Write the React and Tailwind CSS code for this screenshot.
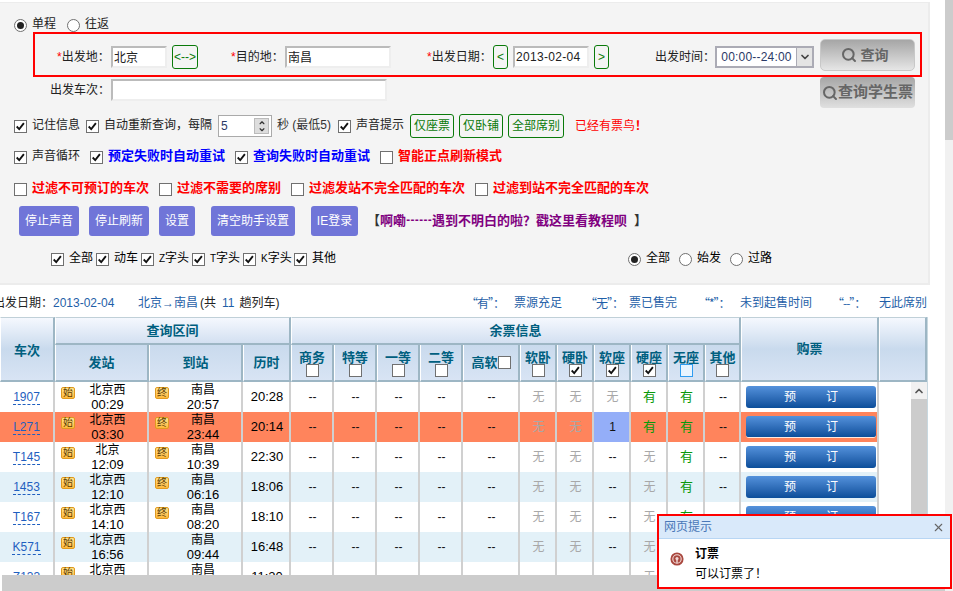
import React from "react";
import { Search, X, ChevronUp, ChevronDown } from "lucide-react";

const Check = () => (
  <svg viewBox="0 0 13 13" className="w-[11px] h-[11px]">
    <path d="M2 6.5 L5 9.5 L10.5 2.5" fill="none" stroke="#111" strokeWidth="2.2" />
  </svg>
);

function Cb({ on, hover, cls = "" }) {
  return (
    <span className={`inline-flex items-center justify-center shrink-0 w-[13px] h-[13px] border ${hover ? "border-[#2f9cf0] bg-[#e8f4ff]" : "border-[#707070] bg-white"} ${cls}`}>
      {on ? <Check /> : null}
    </span>
  );
}

function Radio({ on, cls = "" }) {
  return (
    <span className={`inline-flex items-center justify-center shrink-0 w-[13px] h-[13px] rounded-full border border-[#707070] bg-white ${cls}`}>
      {on ? <span className="block w-[7px] h-[7px] rounded-full bg-[#222]" /> : null}
    </span>
  );
}

const inputCls =
  "h-[22px] border-2 border-t-[#bbbbbb] border-l-[#bbbbbb] border-r-[#eeeeee] border-b-[#eeeeee] bg-white px-[1px] text-[12px] text-[#222] outline-none";

const greenBtn =
  "flex items-center justify-center h-[24px] rounded-[3px] border border-[#0a7a0a] text-[#0a7a0a] text-[12px] shrink-0";

const purpleBtn =
  "flex items-center justify-center h-[30px] rounded-[3px] bg-[#7075d8] text-white text-[12px] shrink-0";

const Star = () => <span className="text-[#ff0000]">*</span>;

const rows = [
  { no: "1907", from: "北京西", t1: "00:29", to: "南昌", t2: "20:57", dur: "20:28", s: ["无", "无", "无", "有", "有", "--"], end: true },
  { no: "L271", from: "北京西", t1: "03:30", to: "南昌", t2: "23:44", dur: "20:14", s: ["无", "无", "1", "有", "有", "--"], end: true, hot: true },
  { no: "T145", from: "北京", t1: "12:09", to: "南昌", t2: "10:39", dur: "22:30", s: ["无", "无", "--", "无", "有", "--"], end: true },
  { no: "1453", from: "北京西", t1: "12:10", to: "南昌", t2: "06:16", dur: "18:06", s: ["无", "无", "--", "无", "有", "--"], end: true, alt: true },
  { no: "T167", from: "北京西", t1: "14:10", to: "南昌", t2: "08:20", dur: "18:10", s: ["无", "无", "--", "无", "有", "--"], end: true },
  { no: "K571", from: "北京西", t1: "16:56", to: "南昌", t2: "09:44", dur: "16:48", s: ["无", "无", "--", "无", "有", "--"], alt: true },
  { no: "Z133", from: "北京西", t1: "18:05", to: "南昌", t2: "05:25", dur: "11:20", s: ["--", "--", "--", "无", "有", "--"] },
];

const colW = [55, 94, 94, 48, 43, 43, 43, 43, 57, 37, 37, 37, 37, 37, 36, 138, 48];

const thBase = "p-0 text-[13px] font-bold text-[#005f7f] text-center align-middle border-r-2 border-r-[#9db6c4] border-l border-l-white";
const topGrad = "bg-linear-to-b from-[#f5f8fe] to-[#d3e0f1]";
const subGrad = "bg-linear-to-b from-[#c9daed] to-[#d8e4f4]";
const tallGrad = "bg-linear-to-b from-[#f5f8fe] via-[#c9daed] to-[#d8e4f4]";
const headTop = "border-t border-t-[#c0d0d8] border-b-2 border-b-[#9db6c4]";

function Badge({ label, hidden }) {
  return (
    <span
      className={`flex items-center justify-center shrink-0 w-[14px] h-[12px] mt-[4px] rounded-[2px] border border-[#e09a20] bg-linear-to-b from-[#ffe28a] to-[#ffb93a] text-[10px] leading-none text-[#5a3a00] ${hidden ? "invisible" : ""}`}
    >
      {label}
    </span>
  );
}

function Seat({ v }) {
  const blue = v === "1";
  const color = v === "有" ? "text-[#0a9a0a] text-[13px]" : v === "无" ? "text-[#a8a8a8]" : "text-[#111]";
  return (
    <td className={`p-0 pl-[2px] text-center text-[12px] border-r-2 border-r-[#d0d0d0] ${blue ? "bg-[#94aef8]" : ""} ${color}`}>{v}</td>
  );
}

function SeatHead({ label, on, hover }) {
  return (
    <th className={`${thBase} ${subGrad} border-b-2 border-b-[#9db6c4]`}>
      <div className="flex flex-col items-center leading-[13px] mt-[2px]">
        <span className="whitespace-nowrap">{label}</span>
        <Cb on={on} hover={hover} />
      </div>
    </th>
  );
}

function Legend({ mark, text, cls }) {
  return (
    <span className={`flex justify-between ${cls}`}>
      <span className="-ml-[3px] tracking-[-1px] font-['Noto_Sans_CJK_SC',sans-serif]">{mark}</span>
      <span>{text}</span>
    </span>
  );
}

export default function App() {
  return (
    <div className="relative flex w-[953px] h-[591px] overflow-hidden bg-white text-[12px] text-[#222] font-['Liberation_Sans','Noto_Sans_CJK_SC',sans-serif]">
      <div className="w-[945px] shrink-0">
        {/* Search panel */}
        <div className="w-[930px] h-[283px] mt-[2px] pt-[15px] bg-[#f4f4f4] border-t border-r-2 border-b-2 border-[#ececec]">
          <div className="flex items-center h-[14px] pl-[14px] leading-[14px]">
            <Radio on />
            <span className="ml-[5px] -mt-[3px]">单程</span>
            <Radio cls="ml-[11px]" />
            <span className="ml-[5px] -mt-[3px]">往返</span>
          </div>

          <div className="flex items-center ml-[33px] w-[889px] h-[45px] border-2 border-[#ff0000] pt-[4px]">
            <span className="ml-[22px] w-[49px] whitespace-nowrap"><Star />出发地：</span>
            <input readOnly value="北京" className={`${inputCls} ml-[5px] w-[56px]`} />
            <button className={`${greenBtn} ml-[5px] w-[26px] text-[8px]`}>{"<-->"}</button>
            <span className="ml-[33px] w-[49px] whitespace-nowrap"><Star />目的地：</span>
            <input readOnly value="南昌" className={`${inputCls} ml-[5px] w-[106px]`} />
            <span className="ml-[36px] w-[66px] whitespace-nowrap"><Star />出发日期：</span>
            <button className={`${greenBtn} w-[15px] text-[10px]`}>{"<"}</button>
            <input readOnly value="2013-02-04" className={`${inputCls} ml-[5px] w-[76px] text-[#2b3a67] tracking-[0.3px]`} />
            <button className={`${greenBtn} ml-[5px] w-[15px] text-[10px]`}>{">"}</button>
            <span className="ml-[46px] w-[60px] whitespace-nowrap">出发时间：</span>
            <div className="flex items-center w-[99px] h-[22px] border-2 border-[#ababb5] bg-white">
              <span className="flex-1 text-center text-[#2b3a67] tracking-[0.2px]">00:00--24:00</span>
              <span className="flex items-center justify-center w-[16px] h-full bg-[#e4e4e4] border-l border-[#ababb5]">
                <ChevronDown size={12} strokeWidth={3.5} color="#444" />
              </span>
            </div>
            <button className="flex items-center justify-center gap-[4px] pr-[6px] ml-[6px] w-[95px] h-[32px] -mt-[3px] rounded-[5px] border border-[#c8c8c8] bg-linear-to-b from-[#a6a6a6] to-[#e6e6e6] text-[14px] font-bold text-[#666666]">
              <Search size={16} strokeWidth={3} color="#666666" />
              查询
            </button>
          </div>

          <div className="flex items-start h-[31px]">
            <span className="ml-[50px] mt-[4px] w-[61px] whitespace-nowrap">出发车次：</span>
            <input readOnly value="" className={`${inputCls} mt-[2px] w-[276px]`} />
            <button className="flex items-center justify-center ml-[433px] w-[95px] h-[31px] rounded-[4px] bg-linear-to-b from-[#a6a6a6] to-[#e0e0e0] text-[15px] font-bold text-[#666666] whitespace-nowrap">
              <Search size={16} strokeWidth={3} color="#666666" className="shrink-0" />
              查询学生票
            </button>
          </div>

          <div className="flex items-center h-[24px] mt-[6px] pl-[14px]">
            <Cb on />
            <span className="ml-[5px] -mt-[2px] whitespace-nowrap">记住信息</span>
            <Cb on cls="ml-[6px]" />
            <span className="ml-[5px] -mt-[2px] whitespace-nowrap">自动重新查询，每隔</span>
            <div className="flex items-center ml-[6px] w-[54px] h-[22px] border border-[#aaaaaa] bg-white pl-[2px]">
              <span className="flex-1 text-[#2b3a67]">5</span>
              <span className="flex flex-col w-[15px] h-[16px] mr-[2px] bg-[#dddddd] border border-[#bbbbbb]">
                <ChevronUp size={8} strokeWidth={4} color="#333" className="mx-auto" />
                <ChevronDown size={8} strokeWidth={4} color="#333" className="mx-auto -mt-[1px]" />
              </span>
            </div>
            <span className="ml-[5px] w-[53px] -mt-[2px] whitespace-nowrap text-[#333]">秒 (最低5)</span>
            <Cb on cls="ml-[8px]" />
            <span className="ml-[5px] -mt-[2px] whitespace-nowrap">声音提示</span>
            <button className={`${greenBtn} ml-[6px] w-[44px]`}>仅座票</button>
            <button className={`${greenBtn} ml-[5px] w-[44px]`}>仅卧铺</button>
            <button className={`${greenBtn} ml-[5px] w-[56px]`}>全部席别</button>
            <span className="ml-[11px] whitespace-nowrap text-[#ff0000]">已经有票鸟<b>！</b></span>
          </div>

          <div className="flex items-center h-[14px] mt-[12px] pl-[14px]">
            <Cb on />
            <span className="ml-[5px] -mt-[3px] w-[48px] whitespace-nowrap">声音循环</span>
            <Cb on cls="ml-[10px]" />
            <b className="ml-[5px] -mt-[3px] w-[117px] text-[13px] whitespace-nowrap text-[#0000ff]">预定失败时自动重试</b>
            <Cb on cls="ml-[10px]" />
            <b className="ml-[5px] -mt-[3px] w-[117px] text-[13px] whitespace-nowrap text-[#0000ff]">查询失败时自动重试</b>
            <Cb cls="ml-[10px]" />
            <b className="ml-[5px] -mt-[3px] text-[13px] whitespace-nowrap text-[#ff0000]">智能正点刷新模式</b>
          </div>

          <div className="flex items-center h-[14px] mt-[18px] pl-[14px]">
            <Cb />
            <b className="ml-[5px] -mt-[3px] w-[117px] text-[13px] whitespace-nowrap text-[#ff0000]">过滤不可预订的车次</b>
            <Cb cls="ml-[10px]" />
            <b className="ml-[5px] -mt-[3px] w-[104px] text-[13px] whitespace-nowrap text-[#ff0000]">过滤不需要的席别</b>
            <Cb cls="ml-[10px]" />
            <b className="ml-[5px] -mt-[3px] w-[156px] text-[13px] whitespace-nowrap text-[#ff0000]">过滤发站不完全匹配的车次</b>
            <Cb cls="ml-[10px]" />
            <b className="ml-[5px] -mt-[3px] text-[13px] whitespace-nowrap text-[#ff0000]">过滤到站不完全匹配的车次</b>
          </div>

          <div className="flex items-center h-[30px] mt-[10px] pl-[19px]">
            <button className={`${purpleBtn} w-[60px]`}>停止声音</button>
            <button className={`${purpleBtn} w-[60px] ml-[10px]`}>停止刷新</button>
            <button className={`${purpleBtn} w-[36px] ml-[10px]`}>设置</button>
            <button className={`${purpleBtn} w-[84px] ml-[16px]`}>清空助手设置</button>
            <button className={`${purpleBtn} w-[47px] ml-[16px]`}>IE登录</button>
            <b className="ml-[9px] text-[13px] whitespace-nowrap text-[#333]">【</b>
            <b className="text-[13px] whitespace-nowrap text-[#800080]">啊嘞┅┅遇到不明白的啦？戳这里看教程呗</b>
            <b className="ml-[7px] text-[13px] whitespace-nowrap text-[#333]">】</b>
          </div>

          <div className="flex items-center h-[14px] mt-[16px] text-black">
            <Cb on cls="ml-[51px]" />
            <span className="ml-[5px] -mt-[3px] w-[23px] whitespace-nowrap">全部</span>
            <Cb on cls="ml-[4px]" />
            <span className="ml-[5px] -mt-[3px] w-[23px] whitespace-nowrap">动车</span>
            <Cb on cls="ml-[4px]" />
            <span className="ml-[5px] -mt-[3px] w-[29px] whitespace-nowrap"><span className="text-[10px]">Z</span>字头</span>
            <Cb on cls="ml-[4px]" />
            <span className="ml-[5px] -mt-[3px] w-[29px] whitespace-nowrap"><span className="text-[10px]">T</span>字头</span>
            <Cb on cls="ml-[4px]" />
            <span className="ml-[5px] -mt-[3px] w-[29px] whitespace-nowrap"><span className="text-[10px]">K</span>字头</span>
            <Cb on cls="ml-[4px]" />
            <span className="ml-[5px] -mt-[3px] w-[23px] whitespace-nowrap">其他</span>
            <Radio on cls="ml-[293px]" />
            <span className="ml-[5px] -mt-[3px] w-[23px] whitespace-nowrap">全部</span>
            <Radio cls="ml-[10px]" />
            <span className="ml-[5px] -mt-[3px] w-[23px] whitespace-nowrap">始发</span>
            <Radio cls="ml-[10px]" />
            <span className="ml-[5px] -mt-[3px] w-[23px] whitespace-nowrap">过路</span>
          </div>
        </div>

        {/* Summary line */}
        <div className="flex items-center h-[32px] pt-[3px] text-[#1f5fa8] whitespace-nowrap">
          <span className="-ml-[7px] w-[60px] text-[#222]">出发日期：</span>
          <span className="w-[60px]">2013-02-04</span>
          <span className="ml-[25px] w-[62px]">北京→南昌</span>
          <span className="text-[#222]">(共</span>
          <span className="ml-[6px]">11</span>
          <span className="ml-[5px] text-[#222]">趟列车)</span>
          <div className="flex ml-auto mr-[18px]">
            <Legend mark="“有”：" text="票源充足" cls="w-[93px]" />
            <Legend mark="“无”：" text="票已售完" cls="ml-[26px] w-[89px]" />
            <Legend mark="“*”：" text="未到起售时间" cls="ml-[24px] w-[111px]" />
            <Legend mark="“--”：" text="无此席别" cls="ml-[23px] w-[92px]" />
          </div>
        </div>

        {/* Train table */}
        <div className="w-[928px] h-[258px] overflow-hidden border-r border-[#c8d8e0]">
          <table className="table-fixed border-separate border-spacing-0 w-[927px]">
            <colgroup>
              {colW.map((w, i) => (
                <col key={i} style={{ width: w }} />
              ))}
            </colgroup>
            <thead>
              <tr className="h-[28px]">
                <th rowSpan={2} className={`${thBase} ${tallGrad} ${headTop} pt-[3px]`}>车次</th>
                <th colSpan={3} className={`${thBase} ${topGrad} ${headTop} pt-[1px]`}>查询区间</th>
                <th colSpan={11} className={`${thBase} ${topGrad} ${headTop} pt-[1px]`}>余票信息</th>
                <th rowSpan={2} className={`${thBase} ${tallGrad} ${headTop}`}>购票</th>
                <th rowSpan={2} className={`${thBase} ${tallGrad} ${headTop}`}></th>
              </tr>
              <tr className="h-[37px]">
                <th className={`${thBase} ${subGrad} border-b-2 border-b-[#9db6c4]`}>发站</th>
                <th className={`${thBase} ${subGrad} border-b-2 border-b-[#9db6c4]`}>到站</th>
                <th className={`${thBase} ${subGrad} border-b-2 border-b-[#9db6c4]`}>历时</th>
                <SeatHead label="商务" />
                <SeatHead label="特等" />
                <SeatHead label="一等" />
                <SeatHead label="二等" />
                <th className={`${thBase} ${subGrad} border-b-2 border-b-[#9db6c4]`}>
                  <div className="flex items-center justify-center">
                    <span className="whitespace-nowrap">高软</span>
                    <Cb />
                  </div>
                </th>
                <SeatHead label="软卧" />
                <SeatHead label="硬卧" on />
                <SeatHead label="软座" on />
                <SeatHead label="硬座" on />
                <SeatHead label="无座" hover />
                <SeatHead label="其他" />
              </tr>
            </thead>
            <tbody>
              {rows.map((r, idx) => (
                <tr key={r.no} className={`h-[30px] ${r.hot ? "bg-[#ff845c]" : r.alt ? "bg-[#e3f1f8]" : "bg-white"}`}>
                  <td className="p-0 text-center border-r-2 border-r-[#d0d0d0]">
                    <span className="text-[12px] text-[#1f5fc0] border-b border-dashed border-[#1f5fc0] leading-[14px] inline-block">{r.no}</span>
                  </td>
                  <td className="p-0 border-r-2 border-r-[#d0d0d0]">
                    <div className="flex items-start pl-[6px] pr-[7px] pt-[1px] h-[30px] overflow-hidden">
                      <Badge label="始" />
                      <div className="flex-1 text-center text-black">
                        <div className="leading-[15px]">{r.from}</div>
                        <div className="leading-[14px] text-[13px]">{r.t1}</div>
                      </div>
                    </div>
                  </td>
                  <td className="p-0 border-r-2 border-r-[#d0d0d0]">
                    <div className="flex items-start pl-[6px] pr-[4px] pt-[1px] h-[30px] overflow-hidden">
                      <Badge label="终" hidden={!r.end} />
                      <div className="flex-1 text-center text-black">
                        <div className="leading-[15px]">{r.to}</div>
                        <div className="leading-[14px] text-[13px]">{r.t2}</div>
                      </div>
                    </div>
                  </td>
                  <td className="p-0 pl-[2px] text-center text-[13px] text-black border-r-2 border-r-[#d0d0d0]">{r.dur}</td>
                  {[0, 1, 2, 3, 4].map((k) => (
                    <Seat key={k} v="--" />
                  ))}
                  {r.s.map((v, k) => (
                    <Seat key={`s${k}`} v={v} />
                  ))}
                  <td className="p-0 border-r-2 border-r-[#d0d0d0]">
                    <div className={`flex items-center justify-center gap-[30px] ml-[5px] w-[130px] h-[22px] rounded-[3px] bg-linear-to-b from-[#5492dc] to-[#0a4e9a] text-white ${r.hot ? "border-b border-b-[#ffe9e0]" : ""}`}>
                      <span>预</span>
                      <span>订</span>
                    </div>
                  </td>
                  {idx === 0 ? (
                    <td rowSpan={rows.length} className="p-0 align-top bg-white">
                      <div className="flex flex-col w-[16px] h-[210px] ml-auto">
                        <span className="flex items-center justify-center h-[17px] bg-[#f1f1f1]">
                          <ChevronUp size={12} strokeWidth={3.5} color="#555" />
                        </span>
                        <span className="flex-1 bg-[#cccccc]" />
                      </div>
                    </td>
                  ) : null}
                </tr>
              ))}
            </tbody>
          </table>
        </div>

        {/* Table horizontal scrollbar */}
        <div className="ml-[2px] h-[16px] bg-[#cccccc]" />
      </div>

      {/* Page scrollbar */}
      <div className="flex flex-col w-[8px] shrink-0 bg-[#f1f1f1]">
        <div className="h-[140px] bg-[#cccccc]" />
      </div>

      {/* Notification popup */}
      <div className="absolute left-[657px] top-[514px] w-[295px] h-[75px] border-2 border-[#ff0000] bg-white">
        <div className="flex items-center justify-between h-[23px] px-[5px] bg-[#d9e9fa] border-b border-[#b8d6f4] text-[#4a78b8]">
          <span className="leading-none">网页提示</span>
          <X size={13} strokeWidth={2} color="#666" />
        </div>
        <div className="flex pt-[5px]">
          <svg viewBox="0 0 16 16" className="ml-[11px] mt-[8px] w-[14px] h-[14px] shrink-0">
            <circle cx="8" cy="8" r="7.5" fill="#a9483f" />
            <circle cx="8" cy="8" r="4.8" fill="none" stroke="#f2d9d6" strokeWidth="1.3" />
            <circle cx="8" cy="7.5" r="1.8" fill="#f2d9d6" />
            <rect x="7.2" y="9" width="1.6" height="3.5" fill="#f2d9d6" />
          </svg>
          <div className="ml-[11px] text-black">
            <div className="font-bold leading-[20px]">订票</div>
            <div className="leading-[20px]">可以订票了！</div>
          </div>
        </div>
      </div>
    </div>
  );
}
